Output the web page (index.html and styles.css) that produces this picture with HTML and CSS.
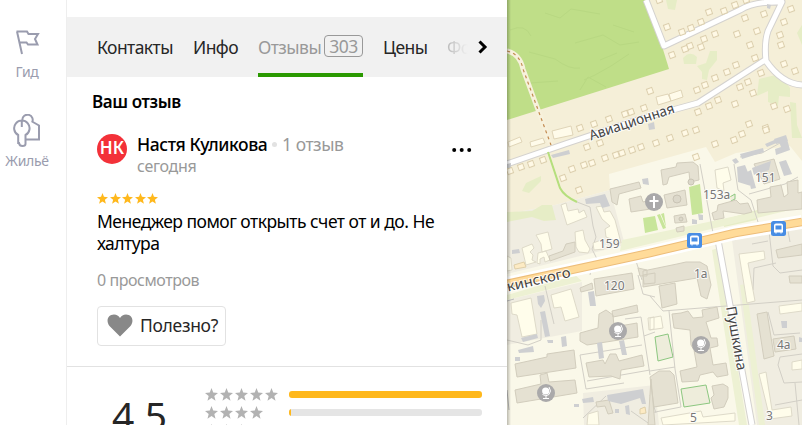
FILE: index.html
```html
<!DOCTYPE html>
<html lang="ru">
  <head>
    <meta charset="UTF-8" />
    <meta name="viewport" content="width=device-width, initial-scale=1.0" />
    <title>Отзывы</title>
    <link rel="stylesheet" href="styles.css">
  </head>
  <body>
    <svg class="defs">
      <symbol id="star" viewBox="0 0 12 12">
        <path d="M6 0 L7.6 4.2 L12 4.5 L8.6 7.3 L9.7 11.8 L6 9.3 L2.3 11.8 L3.4 7.3 L0 4.5 L4.4 4.2Z" />
      </symbol>
    </svg>
    <div class="app">
      <nav class="rail">
        <a class="rail-item">
          <svg class="rail-icon" width="26" height="28" viewBox="0 0 26 28">
            <path d="M2.5 3.5 H13 L14.5 6 H24 L21 11 L23.5 16.5 H14 L12.5 14.5 H5.5 M3 3.5 L8 26" />
          </svg>
          <span class="rail-text">Гид</span>
        </a>
        <a class="rail-item housing">
          <svg class="rail-icon" width="28" height="34" viewBox="0 0 28 34">
            <path d="M5.2 29 V21 A7.7 7.7 0 1 1 12.5 21 V30 Q12.5 32 9.5 32 Q6.5 32 6 29Z M8.8 7 V13 M9.3 6 A5.2 5.2 0 1 1 19 8.5 M19 7.5 L26 11.5 V25.5 H13" />
          </svg>
          <span class="rail-text">Жильё</span>
        </a>
      </nav>

      <main class="panel">
        <div class="tabs">
          <a class="tab t-contacts">Контакты</a>
          <a class="tab t-info">Инфо</a>
          <a class="tab active"><span class="t-reviews">Отзывы</span><span class="count">303</span></a>
          <a class="tab t-prices">Цены</a>
          <a class="tab faded">Фо</a>
          <svg class="next" width="10" height="14" viewBox="0 0 10 14"><path d="M1.5 1.5 L7 7 L1.5 12.5" /></svg>
        </div>

        <section class="review">
          <h2 class="title">Ваш отзыв</h2>
          <div class="author">
            <div class="avatar">НК</div>
            <div class="author-info">
              <div class="author-line">
                <span class="name">Настя Куликова</span>
                <span class="dot"></span>
                <span class="reviews">1 отзыв</span>
              </div>
              <div class="date">сегодня</div>
            </div>
            <svg class="more" width="20" height="6" viewBox="0 0 20 6">
              <circle cx="2.2" cy="3" r="2" /><circle cx="9.7" cy="3" r="2" /><circle cx="17.2" cy="3" r="2" />
            </svg>
          </div>
          <div class="stars gold">
            <svg><use href="#star" /></svg><svg><use href="#star" /></svg><svg><use href="#star" /></svg><svg><use href="#star" /></svg><svg><use href="#star" /></svg>
          </div>
          <p class="text">Менеджер помог открыть счет от и до. Не<br />халтура</p>
          <div class="views">0 просмотров</div>
          <button class="useful">
            <svg width="26" height="23" viewBox="0 0 26 23"><path d="M13 22.5 L2.5 12 C-1.5 7 1 .5 7 .5 Q11 .5 13 4 Q15 .5 19 .5 C25 .5 27.5 7 23.5 12Z" /></svg>
            <span class="useful-text">Полезно?</span>
          </button>
        </section>

        <section class="rating">
          <div class="score">4,5</div>
          <div class="rows">
            <div class="row">
              <div class="stars rate"><svg><use href="#star" /></svg><svg><use href="#star" /></svg><svg><use href="#star" /></svg><svg><use href="#star" /></svg><svg><use href="#star" /></svg></div>
              <div class="bar"><div class="fill" style="width: 100%"></div></div>
            </div>
            <div class="row">
              <div class="stars rate"><svg><use href="#star" /></svg><svg><use href="#star" /></svg><svg><use href="#star" /></svg><svg><use href="#star" /></svg></div>
              <div class="bar"><div class="fill" style="width: 1%"></div></div>
            </div>
            <div class="row">
              <div class="stars rate"><svg><use href="#star" /></svg><svg><use href="#star" /></svg><svg><use href="#star" /></svg></div>
            </div>
          </div>
        </section>
      </main>

      <div class="map">
        <svg class="map-svg" width="295" height="425" viewBox="507 0 295 425">
          <defs>
            <marker id="house" markerWidth="10" markerHeight="10" refX="5" refY="5" markerUnits="userSpaceOnUse">
              <rect class="house" x="2.2" y="2.2" width="5.6" height="5.6" transform="rotate(-20 5 5)" />
            </marker>
            <linearGradient id="edge">
              <stop class="edge-from" offset="0" />
              <stop class="edge-to" offset="1" />
            </linearGradient>
            <symbol id="bus" viewBox="0 0 16 16">
              <rect class="bus-bg" x=".5" y=".5" width="15" height="15" rx="2.5" />
              <path class="bus-body" d="M3.5 12 V5 Q3.5 3 5.5 3 H10.5 Q12.5 3 12.5 5 V12 H11 V13 H10 V12 H6 V13 H5 V12Z" />
              <rect class="bus-bg" x="5" y="5" width="6" height="4" />
            </symbol>
            <symbol id="globe" viewBox="0 0 18 18">
              <circle class="pin" cx="9" cy="9" r="9" />
              <circle class="ball" cx="8.7" cy="7" r="3.6" />
              <path class="stand" d="M12 3 Q15 7 12 10.5 Q9 13 5.5 10.5 M9 12 V14.5 M6 14.5 H12" />
            </symbol>
          </defs>

          <!-- land -->
          <rect class="land" x="507" y="0" width="295" height="425" />
          <path class="field" d="M507 0 H802 V161 L790 146 L736 153 L715 162 L706 147 L609 174 L610 190 L555 205 L507 214Z" />
          <path class="block" d="M507 214 L555 205 L610 190 L625 245 L507 274Z" />
          <path class="block" d="M507 300 L582 282 L582 331 L507 345Z" />
          <path class="block" d="M732 240 L802 224 V425 H757Z" />
          <path class="block" d="M583 393 L655 385 L659 425 H584Z" />
          <path class="forest" d="M507 0 H648 L669 69 L507 120Z" />
          <path class="forest-line" d="M510 30 Q525 23 531 36 M529 52 L555 59 Q570 70 580 68 M530 83 L558 81 M545 13 L560 18 L571 9 L600 14 M575 43 L603 35 L620 45 L639 42 M584 80 L595 75 L611 66 L629 54 M580 90 L588 77 L606 87 M613 25 L634 32 M600 60 L617 53" />
          <path class="grass" d="M522 191 L526 183 L541 176 L541 181 L529 193Z M507 212 L532 211 L542 205 L552 205 L556 220 L544 221 L532 217 L507 222Z M666 0 H677 L675 10 L668 9Z M683 58 Q690 50 697 57 L696 64 H684Z M697 66 L706 63 L710 51 H717 V60 L709 70 L707 80 L702 79 V72Z M759 79 L780 74 L790 88 V97 L779 96 L778 106 L768 102 V91 L757 96Z M790 102 L796 103 L797 125 L802 138 H792Z M797 33 L802 25 V45Z M723 220 L761 209 L756 220 L724 227Z" />
          <path class="verge" d="M507 295 L575 275 L582 281 L507 300Z M622 240 L680 228 L802 202 V207 L620 251Z M712 250 L718 248 L747 425 H739Z M740 285 L746 284 L765 425 H759Z" />
          <path class="court" d="M689 187 L700 184 L703 213 L692 215Z M643 218 L655 216 L658 230 L645 233Z M657 215 L660 214 L666 228 L663 229Z M661 214 L664 213 L666 227Z" />
          <path class="pitch" d="M655 337 L668 334 L673 357 L658 361Z M681 389 L706 385 L710 403 L684 407Z M728 198 L735 194 V199 L731 201" />

          <!-- footpaths and driveways -->
          <path class="path" d="M577 202 L590 207 L593 226 L596 237 L592 249 L598 261 M507 340 L528 345 L541 340 V320 M545 286 L554 324 M580 355 L586 389 L624 383 M580 355 L642 345 M587 381 L650 370 M625 319 L641 317 L650 375 M638 275 L643 294 L655 297 M644 336 L655 332 M700 164 L713 233 M749 194 L785 184 L798 177 M734 164 L738 190 L751 200 L758 222 M740 157 L762 153 L780 143 M597 261 H593 M636 261 L642 280 M752 244 L768 241 M769 231 L773 266 L780 273 L802 270 M754 268 L776 263 M754 268 L753 290 M788 231 L790 242 M650 296 L663 311 L802 300 M669 311 L675 369 L681 407 L650 413 M650 371 L675 367 M768 312 L774 335 L800 333 M802 354 L780 357 L778 365 L784 383 L802 382 M775 405 L802 400 M795 383 L799 425 M590 275 L593 260 M583 418 L606 396 M631 411 L651 425 M650 395 L656 413" />
          <path class="wall" d="M507 301 L514 299 M507 390 L509 410" />

          <!-- streets -->
          <path class="casing" d="M507 164 L565 144 L640 119 L698 103 L765 60 M646 0 L664 46 L740 10 Q755 1 782 2 L768 31 Q764 43 766 61 Q782 84 802 85 M718 240 L752 425" />
          <path class="street" d="M507 164 L565 144 L640 119 L698 103 L765 60 M646 0 L664 46 L740 10 Q755 1 782 2 L768 31 Q764 43 766 61 Q782 84 802 85 M718 240 L752 425" />
          <path class="avenue-side" d="M502 285 L650 253 L735 233 L802 222" />
          <path class="avenue-edge" d="M502 285 L650 253 L735 233 L802 222" />
          <path class="avenue" d="M502 285 L650 253 L735 233 L802 222" />
          <path class="trail" d="M507 51 Q520 54 523 69 L551 145" />
          <path class="trail-dash" d="M507 51 Q520 54 523 69 L551 145" />
          <path class="alley" d="M548 152 L560 188 Q564 196 577 202" />

          <!-- buildings -->
          <path class="light" d="M552 131 L571 126 L573 135 L554 139Z M530 142 L543 138 L545 143 L531 147Z M508 142 L520 137 L522 142 L509 147Z M656 97 L668 94 L671 101 L658 105Z M669 94 L681 90 L683 97 L671 101Z" />
          <path class="bright" d="M561 205 L566 203 L568 211 L578 209 L579 213 L584 210 L587 217 L567 225Z M536 235 L548 232 L552 249 L542 252 L541 244Z M522 248 L532 244 L534 248 L530 252 L533 255 L532 260 L536 262 L526 265Z M538 253 L546 251 L550 260 L545 262 L544 257 L540 259 V264 L537 263Z M575 232 L583 230 L585 240 L590 249 L588 253 L579 252 L576 247Z M596 207 L602 206 L604 212 L610 211 L615 220 L621 243 L606 237 L605 229 L610 226 L602 219Z M593 243 L601 240 L604 249 L594 250Z M507 256 L511 258 L512 270 L507 271Z M715 170 L728 167 L731 180 L723 183 L724 191 L717 188Z M739 254 L764 251 L765 259 L748 263 L755 301 L747 303Z M511 303 L531 298 L537 334 L522 337 L517 315 L512 314Z M551 295 L571 289 L579 317 L565 321 L561 307 L554 308Z M650 318 L661 316 L663 328 L650 330Z M648 318 L654 317 V329 L649 330Z M779 306 L802 303 V311 L780 314Z M792 362 L802 360 V369 L792 370Z M759 374 L766 372 L772 410 L791 407 L792 416 L770 419Z M661 418 L701 411 L703 417 L735 413 V421 L663 425Z M588 414 L598 411 L599 425 H587Z" />
          <path class="gold-building" d="M514 265 L524 262 L526 267 L515 269Z M640 409 L645 407 L646 413 L640 414Z" />
          <path class="building" d="M610 189 L639 182 L641 188 L619 194 L617 205 L612 202Z M629 199 L641 196 L643 202 L657 198 V208 L631 212Z M549 256 L563 251 L566 244 L575 242 V252 L550 261Z M661 170 L676 167 L677 163 L693 162 L698 166 L699 180 L690 182 L689 172 L669 177 L667 184 L663 185Z M664 195 L685 190 L687 205 L667 208Z M674 216 L685 214 L687 222 L675 223Z M676 228 L684 226 V231 L677 232Z M712 213 L717 211 L718 205 L736 200 L740 204 L748 203 L752 212 L744 214 L723 211 L724 218 L714 220Z M757 200 L771 197 L770 187 L781 185 L784 197 L788 194 L787 182 L798 180 V193 L802 192 V209 L758 213Z M754 164 L774 159 L780 179 L764 184Z M776 250 L802 244 V255 L778 258Z M643 271 L677 264 L686 262 L700 262 L707 266 L711 285 L707 299 L701 296 L697 278 L643 287Z M594 279 L632 273 L634 289 L596 296Z M580 288 L592 283 L593 289 L581 292Z M643 275 L655 273 V283 L644 284Z M659 286 L675 283 L677 304 L662 308Z M612 311 L637 305 L638 312 L613 317Z M599 314 L606 310 L613 315 L614 327 L637 323 L638 337 L587 345 L580 341 V333 L598 328Z M586 363 L603 360 L605 364 L610 354 H616 L619 361 L642 355 L644 366 L621 370 L620 379 L611 376 L589 377Z M515 364 L547 357 V354 L574 350 L576 368 L517 377Z M540 375 L547 373 L549 382 L575 380 L577 393 L517 403 L515 390 L541 384Z M672 314 L681 313 L688 311 L693 318 L703 317 L702 310 L717 307 L719 318 L706 322 L711 338 L717 338 L718 346 L710 348 L713 365 L726 363 L728 375 L717 377 L713 372 L700 375 L698 381 L682 382 L680 371 L697 367 L694 350 L691 345 L690 330 L674 328Z M650 377 L659 371 H670 L674 375 L678 403 L654 407Z M712 386 L723 384 L728 387 V398 L724 407 L714 409 L711 398 L714 395Z M757 314 L767 312 L774 356 L764 359Z M773 339 L794 336 L796 349 L775 352Z M596 402 L609 400 L613 413 L608 414 L605 406 L597 407Z M638 268 L647 270 V276 H640Z M789 276 H802 V283 H790Z M651 379 L655 425 H648Z" />
          <path class="shed" d="M551 155 L569 150 L570 154 L553 158Z M585 199 L605 194 L610 206 L602 208 L600 203 L586 204Z M512 250 L519 249 L520 253 L512 254Z M642 179 L648 178 L649 185 L643 184Z M740 154 L763 148 L764 152 L742 159Z M765 144 L786 135 L790 150 L776 155 L775 149 L781 147 L779 142 L767 147Z M737 167 L745 165 L749 175 L751 186 L738 182Z M747 172 L751 170 L756 188 L751 189Z M779 162 L786 160 L792 174 L784 176Z M752 168 L771 161 L769 170 L754 175Z M732 160 L736 158 L739 162 L735 164Z M692 219 L697 220 V224 H692Z M698 214 L703 215 V220 H699Z M537 296 L544 295 L545 301 L541 308 L538 304Z M540 312 L545 311 L550 336 L545 337Z M521 338 L537 334 L538 338 L523 342Z M518 350 L533 346 L534 352 L519 353Z M561 337 L566 336 L567 346 L562 347Z M588 292 L594 291 L596 306 L590 306Z M597 343 L602 342 L604 358 L599 359Z M619 341 L624 340 L627 355 L622 355Z M607 395 L643 389 L646 404 H642 L640 398 L621 404 L608 401Z M582 399 L593 397 L594 402 L583 403Z M574 404 H579 V407 H574Z M625 406 L629 405 L630 415 L626 414Z M615 409 H619 V413 H615Z M515 357 H520 V361 H515Z M547 340 H553 V343 H548Z M781 321 H787 V328 H782Z M799 337 L802 338 V342 H799Z M767 4 L771 5 L770 9 L767 8Z M648 124 L654 122 L655 129 L649 130Z M507 164 L511 163 V168 H507Z M774 139 L786 135 L788 141 L776 144Z" />
          <circle class="dome" cx="691" cy="182" r="3" />
          <circle class="dome" cx="677" cy="199" r="4" />
          <circle class="dome" cx="681" cy="219" r="2" />
          <polyline class="houses" points="667,27 682,32 691,28 701,22 709,12 724,11 735,5 746,0 745,18 764,14 791,9 784,22 780,35 781,45 784,64 795,71 757,31 737,34 715,34 704,39 701,47 690,46 685,49 672,55 750,45 755,58 761,73 748,82 740,87 753,93 774,106 787,109 736,65 727,72 715,78 705,85 697,90 718,100 709,106 698,112 735,104 749,124 766,128 742,134 734,140 696,130 685,133 670,138 650,91 644,108 631,112 625,114 609,119 594,124 580,128 510,171 521,167 531,164 543,160 572,169 584,165 592,163 605,158 616,155 622,153 632,150 641,147 563,178 579,190 587,147 600,143 656,143 715,144 696,157 766,130 659,0" />

          <!-- points -->
          <circle class="pin" cx="654" cy="202" r="9" />
          <path class="cross" d="M654 196 V208 M649.5 201 H658.5" />
          <use href="#globe" x="609" y="322" width="18" height="18" />
          <use href="#globe" x="537" y="384" width="18" height="18" />
          <use href="#globe" x="692" y="336" width="18" height="18" />
          <use href="#bus" x="686.5" y="232.5" width="16" height="16" />
          <use href="#bus" x="770.5" y="220.5" width="16" height="16" />

          <!-- labels -->
          <text class="street-name" x="591" y="140.5" textLength="89" lengthAdjust="spacingAndGlyphs" transform="rotate(-18.5 591 140.5)">Авиационная</text>
          <text class="street-name" x="508" y="291.5" textLength="65" lengthAdjust="spacingAndGlyphs" transform="rotate(-13 508 291.5)">кинского</text>
          <text class="street-name" x="726" y="307" textLength="65" lengthAdjust="spacingAndGlyphs" transform="rotate(80 726 307)">Пушкина</text>
          <text class="num" x="599" y="248">159</text>
          <text class="num" x="703" y="199">153а</text>
          <text class="num" x="755" y="182">151</text>
          <text class="num" x="604" y="290">120</text>
          <text class="num" x="694" y="278">1а</text>
          <text class="num" x="777" y="349">4а</text>
          <text class="num" x="690" y="422">5</text>
          <text class="num" x="766" y="420">3</text>
          <rect class="edge" x="507" y="0" width="4" height="425" />
        </svg>
      </div>
    </div>
  </body>
</html>
```
FILE: styles.css
```css
* {
  box-sizing: border-box;
}
body {
  margin: 0;
  overflow: hidden;
  background: #fff;
  font-family: "Noto Sans", "Open Sans", sans-serif;
  color: #000;
}
.defs {
  display: none;
}
.app {
  display: flex;
  width: 802px;
  height: 425px;
  overflow: hidden;
}

/* left rail */
.rail {
  width: 67px;
  flex: none;
  border-right: 1px solid #eee;
  padding: 28px 12px 0 0;
}
.rail-item {
  display: flex;
  flex-direction: column;
  align-items: center;
  color: #9a9cae;
}
.housing {
  margin-top: 33px;
}
.rail-icon {
  fill: none;
  stroke: #9a9cae;
  stroke-width: 2;
}
.rail-text {
  font-size: 14px;
  line-height: 18px;
  margin-top: 7px;
  letter-spacing: -0.3px;
}
.housing .rail-text {
  margin-top: 4px;
}

/* card */
.panel {
  width: 440px;
  flex: none;
  padding-top: 17px;
}
.tabs {
  display: flex;
  height: 60px;
  padding-left: 30px;
  background: #f1f1f1;
  font-size: 17.5px;
  letter-spacing: -0.55px;
  line-height: 60px;
  color: #262626;
  white-space: nowrap;
}
.tab {
  height: 60px;
  margin-right: 20px;
}
.t-contacts {
  width: 76px;
}
.t-info {
  width: 45px;
}
.active {
  display: flex;
  align-items: center;
  width: 105px;
  color: #999;
  border-bottom: 4px solid #2a9900;
}
.t-reviews {
  width: 66px;
  padding-top: 4px;
}
.count {
  width: 39px;
  height: 22px;
  margin-top: 2px;
  border: 1px solid #999;
  border-radius: 4px;
  line-height: 21px;
  text-align: center;
}
.t-prices {
  width: 44px;
}
.faded {
  width: 21px;
  overflow: hidden;
  color: transparent;
  background: linear-gradient(to right, #bbb, #f1f1f1) text;
  margin-right: 10px;
}
.next {
  margin-top: 23px;
  fill: none;
  stroke: #000;
  stroke-width: 3;
}

.review {
  height: 290px;
  padding: 15px 30px 0 30px;
  border-bottom: 1px solid #e2e2e2;
}
.title {
  margin: 0 0 0 -5px;
  font-size: 17px;
  letter-spacing: -0.4px;
  line-height: 20px;
  font-weight: 600;
}
.author {
  display: flex;
  margin-top: 20px;
  height: 45px;
}
.avatar {
  width: 30px;
  height: 30px;
  margin-top: 2px;
  border-radius: 50%;
  background: #f33139;
  color: #fff;
  font-size: 17px;
  line-height: 28px;
  font-weight: 600;
  text-align: center;
}
.author-info {
  flex: 1;
  margin-left: 10px;
}
.author-line {
  display: flex;
  align-items: center;
  font-size: 17.5px;
  letter-spacing: -0.45px;
  line-height: 24px;
  white-space: nowrap;
}
.name {
  width: 130px;
  font-weight: 500;
  letter-spacing: -0.4px;
}
.dot {
  width: 5px;
  height: 5px;
  margin: 0 5px;
  border-radius: 50%;
  background: #e2e2e2;
}
.reviews,
.date {
  color: #999;
}
.date {
  font-size: 16px;
  letter-spacing: -0.3px;
  line-height: 20px;
}
.more {
  margin: 15px 5px 0 0;
}
.stars {
  display: flex;
}
.gold {
  gap: 1.5px;
  margin-top: 16px;
  fill: #ffb81c;
}
.gold svg {
  width: 11px;
  height: 11px;
}
.text {
  margin: 6px 0 0;
  font-size: 17.5px;
  letter-spacing: -0.52px;
  line-height: 22px;
  white-space: nowrap;
}
.views {
  margin-top: 16px;
  font-size: 16px;
  letter-spacing: -0.45px;
  line-height: 20px;
  color: #999;
}
.useful {
  display: flex;
  align-items: center;
  width: 129px;
  height: 40px;
  margin: 16px 0 0;
  padding: 0 0 2px 9px;
  border: 1px solid #e2e2e2;
  border-radius: 4px;
  background: #fff;
  color: #262626;
  font-family: inherit;
  font-size: 17.5px;
  letter-spacing: -0.3px;
  fill: #888;
}
.useful-text {
  margin-left: 7px;
  margin-top: -1px;
}

.rating {
  display: flex;
  height: 58px;
  overflow: hidden;
}
.score {
  width: 138px;
  padding: 25px 0 0 45px;
  font-size: 39px;
  line-height: 46px;
  color: #262626;
}
.row {
  display: flex;
  align-items: center;
  height: 18px;
}
.rows {
  padding-top: 18px;
}
.rate {
  width: 84px;
  gap: 2px;
  fill: #b2b2b2;
}
.rate svg {
  width: 13px;
  height: 13px;
}
.bar {
  width: 193px;
  height: 7px;
  border-radius: 3px;
  background: #e5e5e5;
  overflow: hidden;
}
.fill {
  height: 100%;
  background: #ffb81c;
}

/* map */
.map {
  flex: none;
  width: 295px;
}
.map-svg {
  display: block;
}
.edge {
  fill: url(#edge);
}
.edge-from {
  stop-color: #000;
  stop-opacity: 0.25;
}
.edge-to {
  stop-color: #000;
  stop-opacity: 0;
}
.land {
  fill: #faf8e9;
}
.field {
  fill: #f5efd8;
}
.block {
  fill: #f0ede1;
}
.forest {
  fill: #bfde88;
}
.forest-line {
  fill: none;
  stroke: #b8d882;
}
.grass {
  fill: #e6edc6;
}
.verge {
  fill: #edf1d3;
}
.court {
  fill: #c8e59a;
}
.pitch {
  fill: #eeeddb;
  stroke: #8cc780;
}
.path {
  fill: none;
  stroke: #d2cfc6;
}
.wall {
  fill: none;
  stroke: #bbb;
}
.casing,
.street,
.avenue-side,
.avenue-edge,
.avenue {
  fill: none;
  stroke-linejoin: round;
}
.casing {
  stroke: #d4d2cf;
  stroke-width: 7;
}
.street {
  stroke: #fff;
  stroke-width: 5;
}
.avenue-side {
  stroke: #fff;
  stroke-width: 14;
}
.avenue-edge {
  stroke: #edbd79;
  stroke-width: 8.5;
}
.avenue {
  stroke: #ffdb99;
  stroke-width: 6.5;
}
.trail {
  fill: none;
  stroke: #f7f1dc;
  stroke-width: 5;
}
.trail-dash {
  fill: none;
  stroke: #c28a50;
  stroke-width: 1.2;
  stroke-dasharray: 3 3.5;
}
.alley {
  fill: none;
  stroke: #b5df7d;
  stroke-width: 2;
}
.light {
  fill: #fffbea;
  stroke: #e0d5b8;
}
.bright {
  fill: #fffdeb;
  stroke: #dedac9;
}
.gold-building {
  fill: #fdebc4;
  stroke: #dfcfa8;
}
.building {
  fill: #e5e1d2;
  stroke: #d2cdbd;
}
.shed {
  fill: #cecfd1;
}
.dome {
  fill: #dcd8ca;
  stroke: #c9c4b5;
}
.house {
  fill: #fff9e6;
  stroke: #dccfae;
}
.houses {
  fill: none;
  marker: url(#house);
}
.pin {
  fill: #aaa9aa;
}
.cross {
  stroke: #fff;
  stroke-width: 2;
}
.ball {
  fill: #fff;
}
.stand {
  fill: none;
  stroke: #fff;
}
.bus-bg {
  fill: #488de4;
}
.bus-body {
  fill: #fff;
}
.street-name,
.num {
  font-family: "Noto Sans", sans-serif;
  paint-order: stroke;
  stroke: #fff;
  stroke-width: 2px;
  stroke-opacity: 0.8;
}
.street-name {
  font-size: 14px;
  fill: #444;
}
.num {
  font-size: 12px;
  fill: #777;
}
```
